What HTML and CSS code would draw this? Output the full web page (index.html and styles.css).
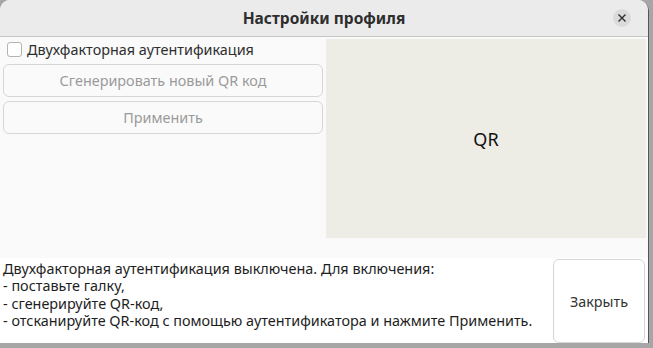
FILE: index.html
```html
<!DOCTYPE html>
<html>
<head>
<title>Настройки профиля</title>
<link rel="stylesheet" href="styles.css">
</head>
<body>
<div class="window">
  <div class="titlebar">
    <span class="title">Настройки профиля</span>
    <button class="close-x" aria-label="close">
      <svg width="10" height="10" viewBox="0 0 10 10"><path d="M1.5 1.5 L8.5 8.5 M8.5 1.5 L1.5 8.5" stroke="#2e2e2e" stroke-width="1.4"/></svg>
    </button>
  </div>
  <div class="top">
    <div class="left">
      <label class="check-row"><span class="checkbox"></span>Двухфакторная аутентификация</label>
      <button class="btn" disabled>Сгенерировать новый QR код</button>
      <button class="btn" disabled>Применить</button>
    </div>
    <div class="qr">QR</div>
  </div>
  <div class="bottom">
    <div class="info">
      Двухфакторная аутентификация выключена. Для включения:<br>
      - поставьте галку,<br>
      - сгенерируйте QR-код,<br>
      - отсканируйте QR-код с помощью аутентификатора и нажмите Применить.
    </div>
    <button class="btn-close">Закрыть</button>
  </div>
</div>
</body>
</html>
```

FILE: styles.css
```css
/* dialog window */
body {
  margin: 0;
  background-color: #a6a6a6;
  font-family: "Noto Sans", "Open Sans", sans-serif;
  font-size: 14.4px;
  color: #2e2e2e;
}

.window {
  width: 648px;
  height: 343px;
  background-color: #fafafa;
  border-radius: 10px 10px 0 0;
  overflow: hidden;
  box-shadow: 1px 1px 0 #555;
  display: flex;
  flex-direction: column;
}

.titlebar {
  height: 36px;
  flex: none;
  background-color: #ebebeb;
  border-bottom: 1px solid #c6c6c6;
  display: flex;
  align-items: center;
  justify-content: center;
  position: relative;
}

.title {
  font-weight: bold;
  font-size: 15.5px;
  color: #2e2e2e;
}

.close-x {
  position: absolute;
  right: 17px;
  top: 9px;
  width: 18px;
  height: 18px;
  border: none;
  border-radius: 50%;
  background-color: #dadada;
  padding: 0;
  display: flex;
  align-items: center;
  justify-content: center;
}

.top {
  display: flex;
  height: 202px;
  flex: none;
}

.left {
  width: 320px;
  padding: 2px 0 0 3px;
  display: flex;
  flex-direction: column;
  gap: 4px;
}

.check-row {
  display: flex;
  align-items: center;
  gap: 5px;
  height: 21px;
  padding-left: 4px;
  color: #2e2e2e;
}

.checkbox {
  width: 13px;
  height: 13px;
  border: 1px solid #b4b4b4;
  border-radius: 3px;
  background-color: #fff;
}

.btn {
  height: 33px;
  border: 1px solid #d6d6d6;
  border-radius: 6px;
  background-color: #fafafa;
  font-family: inherit;
  font-size: 14.4px;
  color: #9a9a9a;
}

.qr {
  width: 320px;
  height: 199px;
  margin: 2px 0 0 3px;
  background-color: #edede6;
  display: flex;
  align-items: center;
  justify-content: center;
  font-size: 18px;
  color: #111;
}

.bottom {
  flex: 1;
  margin-top: 19px;
  background-color: #fff;
  display: flex;
  justify-content: space-between;
}

.info {
  padding: 2px 0 0 3px;
  line-height: 17.4px;
  color: #1e1e1e;
}

.btn-close {
  width: 92px;
  margin: 1px 3px 0 0;
  border: 1px solid #d6d6d6;
  border-radius: 6px;
  background-color: #fff;
  font-family: inherit;
  font-size: 14.4px;
  color: #333;
}
```
